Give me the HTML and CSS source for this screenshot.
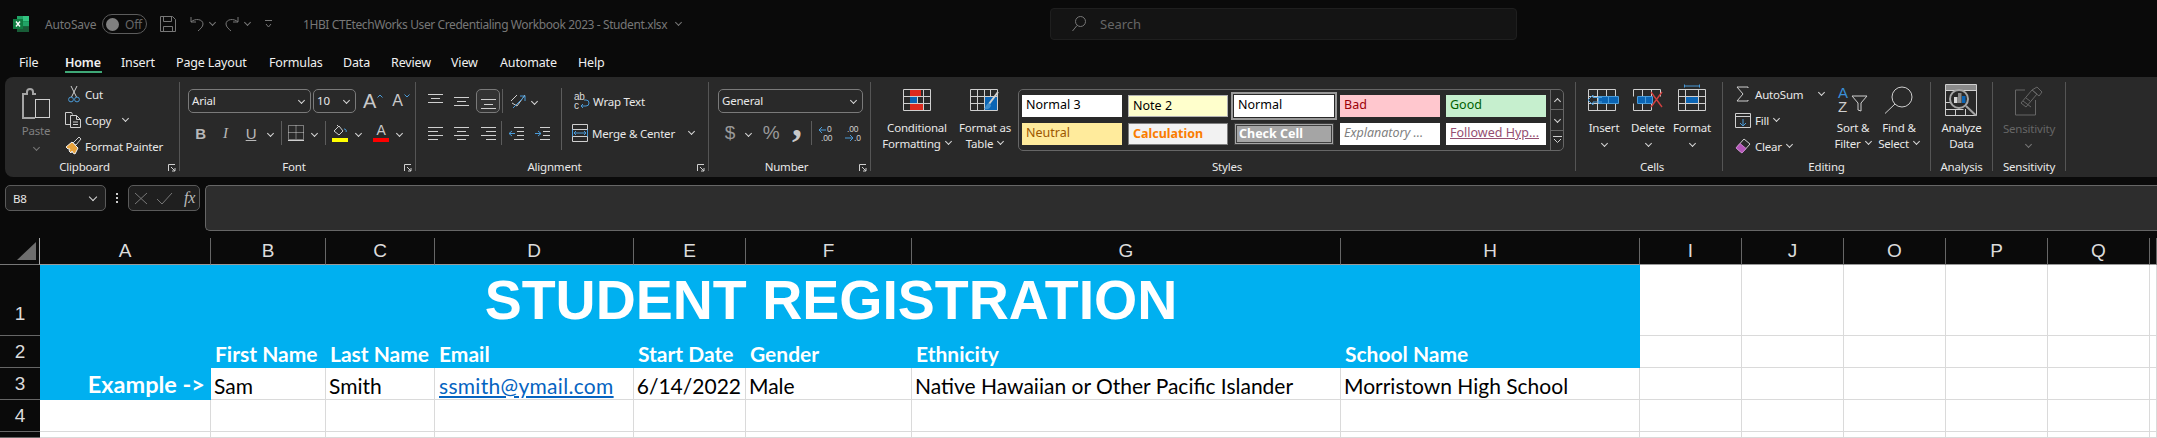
FILE: index.html
```html
<!DOCTYPE html>
<html lang="en">

<head>
  <title>1HBI CTEtechWorks User Credentialing Workbook 2023 - Student.xlsx</title>
  <meta charset="utf-8">
  <link rel="stylesheet" href="styles.css">
</head>

<body>
  <!-- title bar -->
  <header class="titlebar">
    <div class="tb-left">
      <svg class="logo" width="16" height="16">
        <rect x="4" y="0" width="12" height="5.5" fill="#21a366" />
        <rect x="10" y="0" width="6" height="5.5" fill="#33c481" />
        <rect x="4" y="5.5" width="12" height="5" fill="#107c41" />
        <rect x="10" y="5.5" width="6" height="5" fill="#21a366" />
        <rect x="4" y="10.5" width="12" height="5.5" fill="#185c37" />
        <rect x="0" y="3" width="10" height="10" fill="#107c41" />
        <path d="M3 5.5l4 5M7 5.5l-4 5" stroke="#fff" stroke-width="1.4" />
      </svg>
      <span class="autosave">AutoSave</span>
      <span class="toggle"><i class="knob"></i>Off</span>
      <svg class="i dim save" width="16" height="16">
        <path d="M.5.5h12l3 3v12H.5zM3.5.5v5h8v-5M3.5 15.5v-5h9v5" />
      </svg>
      <svg class="i dim undo" width="14" height="16">
        <path d="M1 1v5h5M1 6c4-4 12-3 12 2 0 3-3 5-5 7" />
      </svg>
      <i class="chev dimchev chev-undo"></i>
      <svg class="i dim redo" width="14" height="16">
        <path d="M13 1v5H8M13 6C9 2 1 3 1 8c0 3 3 5 5 7" />
      </svg>
      <i class="chev dimchev chev-redo"></i>
      <svg class="i dim custom" width="8" height="8">
        <path d="M0 .5h7M1 4l2.5 3L6 4" />
      </svg>
      <span class="doc">1HBI CTEtechWorks User Credentialing Workbook 2023 - Student.xlsx</span>
      <i class="chev dimchev chev-doc"></i>
    </div>
    <div class="search">
      <svg class="i dim" width="14" height="16">
        <circle cx="8.5" cy="5.5" r="5" />
        <path d="M5 9.5L.5 15" />
      </svg>
      <span>Search</span>
    </div>
  </header>

  <!-- tabs -->
  <nav class="tabs">
    <a>File</a>
    <a class="active">Home</a>
    <a>Insert</a>
    <a>Page Layout</a>
    <a>Formulas</a>
    <a>Data</a>
    <a>Review</a>
    <a>View</a>
    <a>Automate</a>
    <a>Help</a>
  </nav>

  <!-- ribbon -->
  <section class="ribbon">

    <div class="grp g-clip">
      <div class="grp-body">
        <div class="big paste">
          <svg class="i" width="28" height="32">
            <path class="thick" d="M14 6h-3V4a3 3 0 0 0-6 0v2H1v24h12" transform="translate(0 1)" />
            <rect x="13.5" y="12.5" width="14" height="18" />
          </svg>
          <span class="muted">Paste</span>
          <i class="chev dimchev"></i>
        </div>
        <div class="stack">
          <div class="line">
            <span class="slot">
              <svg class="i cut-ic" width="12" height="18">
                <path d="M3 1l5.5 11M9 1L3.5 12" />
                <circle class="blue" cx="3" cy="14.5" r="2.4" />
                <circle class="blue" cx="9" cy="14.5" r="2.4" />
              </svg>
            </span>
            Cut
          </div>
          <div class="line">
            <span class="slot">
              <svg class="i" width="16" height="16">
                <path d="M5 12.5H.5V.5h6l1 2" />
                <path d="M5.5 3.5h6l4 4v8h-10zM11.5 3.5v4h4M8 10h5M8 12.5h5" />
              </svg>
            </span>
            Copy<i class="chev chev-copy"></i>
          </div>
          <div class="line">
            <span class="slot">
              <svg class="i" width="17" height="20">
                <path class="orange" d="M1 11l6-5 6 6-3 6-2-1-1-2-1 2-2-2 1-2-2 0z" />
                <path d="M8 7l6-6 2 2-5 6z" />
              </svg>
            </span>
            Format Painter
          </div>
        </div>
      </div>
      <div class="grp-label has-launcher">Clipboard</div>
      <svg class="i launcher" width="8" height="8"><path d="M.5 7V.5H7M3 3l4 4M7 4v3H4" /></svg>
    </div>

    <div class="grp g-font">
      <div class="rows">
        <div class="row">
          <div class="sel font-name">Arial<i class="chev"></i></div>
          <div class="sel font-size">10<i class="chev"></i></div>
          <span class="grow">A</span>
          <svg class="i caret" width="6" height="4"><path class="sky" d="M.5 3.5L3 1l2.5 2.5" /></svg>
          <span class="shrink">A</span>
          <svg class="i caret" width="6" height="4"><path class="sky" d="M.5.5L3 3l2.5-2.5" /></svg>
        </div>
        <div class="row">
          <span class="b w25"><b>B</b></span>
          <span class="b w25"><em>I</em></span>
          <span class="b w26"><u>U</u></span>
          <span class="b w12"><i class="chev"></i></span>
          <span class="vsep ml5"></span>
          <svg class="i ml6" width="16" height="16">
            <path class="dots" d="M.5.5h15v14H.5zM8 .5v14M.5 7.5h15" />
            <path d="M0 15.5h16" />
          </svg>
          <span class="b w12 ml4"><i class="chev"></i></span>
          <span class="vsep ml5"></span>
          <span class="swatch ml6">
            <svg class="i" width="16" height="13"><path d="M2 7l5-5 4 5-4 4zM5 1l2 2" /><path class="sky" d="M12 5a2 2 0 0 1 2 3" /></svg>
            <i class="bar yellow"></i>
          </span>
          <span class="b w20"><i class="chev"></i></span>
          <span class="swatch ml5">
            <span class="swatch-a">A</span>
            <i class="bar red"></i>
          </span>
          <span class="b w20"><i class="chev"></i></span>
        </div>
      </div>
      <div class="grp-label has-launcher">Font</div>
      <svg class="i launcher" width="8" height="8"><path d="M.5 7V.5H7M3 3l4 4M7 4v3H4" /></svg>
    </div>

    <div class="grp g-align">
      <div class="split">
        <div class="rows al-left">
          <div class="row">
            <span class="b w26 ml6"><svg class="i" width="15" height="24"><path d="M0 5.5h15M3 9.5h9M0 13.5h15" /></svg></span>
            <span class="b w26"><svg class="i" width="15" height="24"><path d="M0 8.5h15M3 12.5h9M0 16.5h15" /></svg></span>
            <span class="b w24 selected ml2"><svg class="i" width="15" height="24"><path d="M0 10.5h15M3 15.5h9M0 19.5h15" /></svg></span>
            <span class="vsep ml2"></span>
            <svg class="i ml7" width="17" height="17"><path d="M1 8l6-6M2 10l5 3 8-11" /><path class="sky" d="M3 15L15 3M10 3h5v5" /></svg>
            <span class="b w14"><i class="chev"></i></span>
          </div>
          <div class="row">
            <span class="b w26 ml6"><svg class="i" width="15" height="24"><path d="M0 6.5h15M0 10.5h10M0 14.5h15M0 18.5h10" /></svg></span>
            <span class="b w26"><svg class="i" width="15" height="24"><path d="M0 6.5h15M3 10.5h9M0 14.5h15M3 18.5h9" /></svg></span>
            <span class="b w26 ml1"><svg class="i" width="15" height="24"><path d="M0 6.5h15M5 10.5h10M0 14.5h15M5 18.5h10" /></svg></span>
            <span class="vsep"></span>
            <span class="b w26 ml1"><svg class="i" width="15" height="24"><path d="M5 6.5h10M8 10.5h7M8 14.5h7M5 18.5h10" /><path class="sky" d="M0 12.5h6M3 10l-3 2.5L3 15" /></svg></span>
            <span class="b w26"><svg class="i" width="15" height="24"><path d="M5 6.5h10M8 10.5h7M8 14.5h7M5 18.5h10" /><path class="sky" d="M0 12.5h6M3 10l3 2.5L3 15" /></svg></span>
          </div>
        </div>
        <span class="vsep tall"></span>
        <div class="rows al-right">
          <div class="row">
            <svg class="i wrap-ic" width="16" height="20">
              <text x="0" y="9" class="svgtxt">ab</text>
              <text x="0" y="18" class="svgtxt">c</text>
              <path class="sky" d="M7 15h5a3 3 0 0 0 0-6h-2M9 13l-2 2 2 2" />
            </svg>
            <span class="ml3">Wrap Text</span>
          </div>
          <div class="row">
            <svg class="i merge-ic" width="16" height="20">
              <path d="M.5 1.5h15v17H.5zM.5 6.5h15M.5 13.5h15" />
              <path class="sky" d="M2 10h12M4 8l-2 2 2 2M12 8l2 2-2 2M.5 6.5v7M15.5 6.5v7" />
            </svg>
            <span class="ml4">Merge &amp; Center</span>
            <i class="chev chev-merge"></i>
          </div>
        </div>
      </div>
      <div class="grp-label has-launcher">Alignment</div>
      <svg class="i launcher" width="8" height="8"><path d="M.5 7V.5H7M3 3l4 4M7 4v3H4" /></svg>
    </div>

    <div class="grp g-num">
      <div class="rows">
        <div class="row">
          <div class="sel num-fmt">General<i class="chev"></i></div>
        </div>
        <div class="row">
          <span class="b w24 bigsym">$</span>
          <span class="b w12"><i class="chev"></i></span>
          <span class="b w34 bigsym">%</span>
          <span class="b w18 comma">,</span>
          <span class="vsep ml5"></span>
          <span class="b w28">
            <svg class="i" width="17" height="17">
              <text x="9" y="7" class="svgnum">0</text>
              <text x="3" y="16" class="svgnum">.00</text>
              <path class="sky" d="M1 5h7M4 2L1 5l3 3" />
            </svg>
          </span>
          <span class="b w24">
            <svg class="i" width="17" height="17">
              <text x="3" y="7" class="svgnum">.00</text>
              <text x="10" y="16" class="svgnum">.0</text>
              <path class="sky" d="M1 13h8M6 10l3 3-3 3" />
            </svg>
          </span>
        </div>
      </div>
      <div class="grp-label has-launcher">Number</div>
      <svg class="i launcher" width="8" height="8"><path d="M.5 7V.5H7M3 3l4 4M7 4v3H4" /></svg>
    </div>

    <div class="grp g-styles">
      <div class="grp-body">
        <div class="big w76">
          <svg class="i" width="28" height="22">
            <path d="M.5.5h27v21H.5zM7.5.5v21M14.5.5v21M20.5.5v21M.5 7.5h27M.5 14.5h27" />
            <rect class="red-f" x="7" y="1" width="11" height="6" />
            <rect class="blue-f" x="7" y="8" width="7" height="6" />
            <rect class="red-f" x="7" y="15" width="13" height="6" />
          </svg>
          <span class="lbl">Conditional</span>
          <span class="lbl">Formatting<i class="chev ch-in"></i></span>
        </div>
        <div class="big w60">
          <svg class="i" width="30" height="22">
            <path d="M.5.5h27v21H.5zM7.5.5v21M14.5.5v21M20.5.5v21M.5 7.5h27M.5 14.5h27" />
            <rect class="blue-f" x="15" y="8" width="12" height="13" />
            <path class="brush" d="M28 3L19 15" />
            <path class="sky-f" d="M19 14c-3 1-3 4-5 6 4 1 7-1 7-4z" />
          </svg>
          <span class="lbl">Format as</span>
          <span class="lbl">Table<i class="chev ch-in"></i></span>
        </div>
        <div class="gallery">
          <div class="gal-grid">
            <span class="st">Normal 3</span>
            <span class="st note">Note 2</span>
            <span class="st picked">Normal</span>
            <span class="st bad">Bad</span>
            <span class="st good">Good</span>
            <span class="st neutral">Neutral</span>
            <span class="st calc">Calculation</span>
            <span class="st check">Check Cell</span>
            <span class="st expl">Explanatory ...</span>
            <span class="st followed">Followed Hyp...</span>
          </div>
          <div class="gal-scroll">
            <span><i class="chev up"></i></span>
            <span><i class="chev"></i></span>
            <span><svg class="i" width="9" height="8"><path d="M0 .5h9M1 3l3.500 3.500L8 3" /></svg></span>
          </div>
        </div>
      </div>
      <div class="grp-label">Styles</div>
    </div>

    <div class="grp g-cells">
      <div class="grp-body">
        <div class="big w44">
          <svg class="i" width="32" height="22">
            <path d="M.5.5h27v21H.5zM9.5.5v21M18.5.5v21M.5 7.5h27M.5 14.5h27" />
            <rect class="blue-f" x="10" y="8" width="20" height="6" />
            <path class="sky" d="M30.500 7.500h-20v7h20zM20.500 7.500v7" />
            <path class="sky" d="M14 8.500H5V6L0 11l5 5v-3h9" />
          </svg>
          <span class="lbl">Insert</span>
          <span class="lbl"><i class="chev"></i></span>
        </div>
        <div class="big w44">
          <svg class="i" width="30" height="22">
            <path d="M.5.5h27v7M.5.5v7M.5 14.500v7h18M9.500 0v7M18.500 0v7M9.500 15v6M18.500 15v6" />
            <rect class="blue-f" x="5" y="8" width="14" height="6" />
            <path class="sky" d="M4.500 7.500h15v7h-15zM12.500 7.500v7" />
            <path class="xred" d="M18 3l11 15M29 3L18 18" />
          </svg>
          <span class="lbl">Delete</span>
          <span class="lbl"><i class="chev"></i></span>
        </div>
        <div class="big w44">
          <svg class="i top5" width="28" height="27">
            <path class="sky" d="M6.500.5v3M21.500.5v3M6.500 2h15" />
            <path d="M.5 5.500h27v21H.5zM7.500 5.500v21M20.500 5.500v21M.5 12.500h27M.5 19.500h27" />
            <rect class="blue-f" x="8" y="13" width="12" height="6" />
          </svg>
          <span class="lbl">Format</span>
          <span class="lbl"><i class="chev"></i></span>
        </div>
      </div>
      <div class="grp-label">Cells</div>
    </div>

    <div class="grp g-edit">
      <div class="grp-body">
        <div class="stack edit-col">
          <div class="line">
            <span class="slot16">
              <svg class="i" width="14" height="16"><path d="M12 2V1H1l6 7-6 7h11v-1" /></svg>
            </span>
            AutoSum<i class="chev chev-sum"></i>
          </div>
          <div class="line">
            <span class="slot16">
              <svg class="i" width="16" height="15"><path d="M.5.5h15v14H.5zM.5 3.500h15" /><path class="sky" d="M8 6v7M5 10l3 3 3-3" /></svg>
            </span>
            Fill<i class="chev ch-in"></i>
          </div>
          <div class="line">
            <span class="slot16">
              <svg class="i" width="16" height="16"><path d="M1 10l8-9 6 5-8 9z" /><path class="purple-f" d="M1 10l4-4.500 6 5L7 15z" /></svg>
            </span>
            Clear<i class="chev ch-in"></i>
          </div>
        </div>
        <div class="big w46">
          <svg class="i tall-ic" width="30" height="28">
            <text x="0" y="12" class="svgaz blue-t">A</text>
            <text x="0" y="26" class="svgaz">Z</text>
            <path d="M14 10h15l-6 7v8l-3-1v-7z" />
          </svg>
          <span class="lbl">Sort &amp;</span>
          <span class="lbl">Filter<i class="chev ch-in"></i></span>
        </div>
        <div class="big w46">
          <svg class="i tall-ic" width="30" height="28">
            <circle cx="18" cy="11" r="10" />
            <path d="M11 18L1 27.500" />
          </svg>
          <span class="lbl">Find &amp;</span>
          <span class="lbl">Select<i class="chev ch-in"></i></span>
        </div>
      </div>
      <div class="grp-label">Editing</div>
    </div>

    <div class="grp g-ana">
      <div class="grp-body center">
        <div class="big">
          <svg class="i ana-ic" width="32" height="32">
            <path d="M.5.5h31v31H.5zM.5 6.500h31M.5 18.500h5M.5 25.500h18M10.500 25v6M20.500 25v6" />
            <rect x="1" y="1" width="30" height="5" class="gray-f" />
            <circle cx="14" cy="15" r="9" class="thick" />
            <rect x="9" y="13" width="3.500" height="6" class="light-f" />
            <rect x="13" y="9" width="3.500" height="10" class="gray-f" />
            <rect x="17" y="12" width="3.500" height="7" class="blue-f" />
            <path d="M21 22l10 9.500" class="thick" />
          </svg>
          <span class="lbl">Analyze</span>
          <span class="lbl">Data</span>
        </div>
      </div>
      <div class="grp-label">Analysis</div>
    </div>

    <div class="grp g-sens">
      <div class="grp-body center">
        <div class="big">
          <svg class="i off tall-ic" width="28" height="29">
            <path d="M10 4H.5v25h20V14" />
            <path d="M6 17L17 4l5 4L11 21z" />
            <path d="M8 15l8 6M11 12l4 3" />
            <path d="M17 4l5-3 5 5-3 4z" />
          </svg>
          <span class="lbl off-t">Sensitivity</span>
          <span class="lbl"><i class="chev dimchev"></i></span>
        </div>
      </div>
      <div class="grp-label">Sensitivity</div>
    </div>
  </section>

  <!-- name box and formula bar -->
  <div class="fbar">
    <div class="namebox">B8<i class="chev nb"></i></div>
    <div class="fdots"><i></i><i></i><i></i></div>
    <div class="fxbox">
      <svg class="i dim" width="14" height="13"><path d="M1 1l12 11M13 1L1 12" /></svg>
      <svg class="i dim" width="17" height="13"><path d="M1 7l5 5L16 1" /></svg>
      <span class="fx">fx</span>
    </div>
    <div class="finput"></div>
  </div>

  <!-- sheet -->
  <main class="sheet">
    <div class="corner"><svg width="19" height="18"><path d="M19 0v18H0z" fill="#6e6e6e" /></svg></div>
    <div class="ch">A</div><div class="ch">B</div><div class="ch">C</div><div class="ch">D</div><div class="ch">E</div><div class="ch">F</div><div class="ch">G</div><div class="ch">H</div><div class="ch">I</div><div class="ch">J</div><div class="ch">O</div><div class="ch">P</div><div class="ch">Q</div><div class="ch"></div>

    <div class="rh first">1</div>
    <div class="blue-cell title">STUDENT REGISTRATION</div>
    <div class="c"></div><div class="c"></div><div class="c"></div><div class="c"></div><div class="c"></div><div class="c"></div>

    <div class="rh">2</div>
    <div class="blue-cell"></div>
    <div class="blue-cell hd">First Name</div>
    <div class="blue-cell hd">Last Name</div>
    <div class="blue-cell hd">Email</div>
    <div class="blue-cell hd">Start Date</div>
    <div class="blue-cell hd">Gender</div>
    <div class="blue-cell hd">Ethnicity</div>
    <div class="blue-cell hd">School Name</div>
    <div class="c"></div><div class="c"></div><div class="c"></div><div class="c"></div><div class="c"></div><div class="c"></div>

    <div class="rh">3</div>
    <div class="blue-cell example">Example -&gt;</div>
    <div class="c txt">Sam</div>
    <div class="c txt">Smith</div>
    <div class="c txt link">ssmith@ymail.com</div>
    <div class="c txt num">6/14/2022</div>
    <div class="c txt">Male</div>
    <div class="c txt">Native Hawaiian or Other Pacific Islander</div>
    <div class="c txt">Morristown High School</div>
    <div class="c"></div><div class="c"></div><div class="c"></div><div class="c"></div><div class="c"></div><div class="c"></div>

    <div class="rh">4</div>
    <div class="c"></div><div class="c"></div><div class="c"></div><div class="c"></div><div class="c"></div><div class="c"></div><div class="c"></div><div class="c"></div><div class="c"></div><div class="c"></div><div class="c"></div><div class="c"></div><div class="c"></div><div class="c"></div>

    <div class="rh"></div>
    <div class="c"></div><div class="c"></div><div class="c"></div><div class="c"></div><div class="c"></div><div class="c"></div><div class="c"></div><div class="c"></div><div class="c"></div><div class="c"></div><div class="c"></div><div class="c"></div><div class="c"></div><div class="c"></div>
  </main>
</body>

</html>
```
FILE: styles.css
```css
* {
  box-sizing: border-box;
}

html,
body {
  margin: 0;
  height: 438px;
  overflow: hidden;
}

body {
  width: 2157px;
  background-color: #0a0a0a;
  color: #e8e8e8;
  font-family: "Noto Sans", sans-serif;
  font-size: 11.5px;
  letter-spacing: -.2px;
}

/* shared icon strokes */
svg {
  display: block;
  flex: none;
  overflow: visible;
}

.i {
  fill: none;
  stroke: #cfcfcf;
  stroke-width: 1;
}

.i.dim {
  stroke: #777;
}

.i.off {
  stroke: #666;
}

.i .blue,
.i .sky {
  stroke: #4a9bd8;
}

.i .thick {
  stroke-width: 2;
  stroke: #a5a5a5;
}

.i .orange {
  fill: #e8a33d;
  stroke: #f0f0f0;
}

.i .dots {
  stroke-dasharray: 1 1;
}

.i .brush {
  stroke-width: 2;
}

.i .xred {
  stroke: #d04040;
  stroke-width: 1.4;
}

.red-f {
  fill: #dc2a1e;
  stroke: none;
}

.blue-f {
  fill: #0a64b4;
  stroke: none;
}

.sky-f {
  fill: #3f8fce;
  stroke: none;
}

.gray-f {
  fill: #8a8a8a;
  stroke: none;
}

.light-f {
  fill: #d8d8d8;
  stroke: none;
}

.purple-f {
  fill: #b455b8;
  stroke: #c77fcc;
}

.svgtxt {
  font-family: "Liberation Sans", sans-serif;
  font-size: 10px;
  fill: #dcdcdc;
  stroke: none;
}

.svgnum {
  font-size: 8.5px;
  fill: #cfcfcf;
  stroke: none;
}

.svgaz {
  font-family: "Liberation Sans", sans-serif;
  font-size: 15px;
  fill: #cfcfcf;
  stroke: none;
}

.blue-t {
  fill: #3a8fd8;
}

.chev {
  display: inline-block;
  flex: none;
  width: 5px;
  height: 5px;
  border: solid #d8d8d8;
  border-width: 0 1.3px 1.3px 0;
  transform: rotate(45deg);
}

.chev.dimchev {
  border-color: #777;
}

.chev.up {
  transform: rotate(225deg);
  margin-top: 3px;
}

.ch-in {
  margin: 0 1px 3px 5px;
}

/* title bar */
.titlebar {
  display: flex;
  align-items: center;
  height: 48px;
}

.tb-left {
  display: flex;
  align-items: center;
  width: 1050px;
  padding-left: 13px;
  color: #777;
  font-size: 12px;
}

.autosave {
  margin-left: 16px;
  width: 57px;
}

.toggle {
  display: flex;
  align-items: center;
  width: 45px;
  height: 20px;
  padding-left: 3px;
  border: 1px solid #5c5c5c;
  border-radius: 10px;
  color: #666;
}

.knob {
  width: 13px;
  height: 13px;
  margin-right: 6px;
  border-radius: 50%;
  background-color: #808080;
}

.save {
  margin-left: 13px;
}

.undo {
  margin-left: 14px;
}

.chev-undo {
  margin: -4px 0 0 6px;
}

.redo {
  margin-left: 10px;
}

.chev-redo {
  margin: -4px 0 0 6px;
}

.custom {
  margin-left: 15px;
}

.doc {
  margin-left: 30px;
  width: 366px;
  white-space: nowrap;
  letter-spacing: -.4px;
}

.chev-doc {
  margin: -4px 0 0 7px;
}

.search {
  display: flex;
  align-items: center;
  gap: 14px;
  width: 467px;
  height: 32px;
  padding-left: 21px;
  background-color: #141414;
  border: 1px solid #1f1f1f;
  border-radius: 4px;
  color: #666;
  font-size: 13px;
  letter-spacing: 0;
}

/* tabs */
.tabs {
  display: grid;
  grid-template-columns: 46px 56px 55px 93px 74px 48px 60px 49px 78px 40px;
  height: 29px;
  padding-left: 19px;
}

.tabs a {
  height: 25px;
  line-height: 30px;
  font-size: 12.5px;
  letter-spacing: -.15px;
  white-space: nowrap;
  color: #f0f0f0;
}

.tabs a.active {
  width: 37px;
  font-weight: 600;
  border-bottom: 2px solid #3fa877;
}

/* ribbon */
.ribbon {
  display: flex;
  height: 100px;
  margin-left: 5px;
  padding: 5px 0 6px;
  background-color: #292929;
  border-radius: 8px 0 0 8px;
}

.grp {
  position: relative;
  display: flex;
  flex-direction: column;
  flex: none;
  height: 89px;
  border-right: 1px solid #555;
}

.grp-body,
.split {
  display: flex;
  flex: 1;
}

.grp-body.center {
  justify-content: center;
}

.grp-label {
  height: 14px;
  margin-bottom: -3px;
  line-height: 14px;
  text-align: center;
}

.has-launcher {
  padding-right: 15px;
}

.launcher {
  position: absolute;
  right: 3px;
  bottom: -1px;
}

.g-clip { width: 175px; }
.g-font { width: 236px; padding-left: 8px; }
.g-align { width: 293px; }
.g-num { width: 162px; padding-left: 9px; }
.g-styles { width: 705px; padding-left: 8px; }
.g-cells { width: 147px; padding-left: 6px; }
.g-edit { width: 208px; }
.g-ana { width: 62px; }
.g-sens { width: 73px; }

.big {
  display: flex;
  flex-direction: column;
  align-items: center;
  flex: none;
  padding-top: 7px;
}

.big .lbl {
  display: flex;
  align-items: center;
  justify-content: center;
  height: 16px;
  white-space: nowrap;
}

.big svg + .lbl {
  margin-top: 8px;
}

.w76 { width: 76px; }
.w60 { width: 60px; }
.w44 { width: 44px; }
.w46 { width: 46px; }

.top5 {
  margin-top: -5px;
}

.tall-ic {
  margin: -3px 0 -3px;
}

.ana-ic {
  margin: -5px 0 -5px;
}

.off-t {
  color: #666;
}

.stack {
  display: flex;
  flex-direction: column;
  gap: 2px;
}

.line {
  display: flex;
  align-items: center;
  height: 24px;
  white-space: nowrap;
}

.paste {
  width: 60px;
  padding: 5px 0 0 2px;
}

.paste span {
  margin-top: 4px;
}

.paste .chev {
  margin-top: 7px;
}

.muted {
  color: #808080;
}

.slot {
  display: flex;
  width: 20px;
}

.cut-ic {
  margin-left: 3px;
}

.chev-copy {
  margin: -3px 0 0 12px;
}

.slot16 {
  display: flex;
  justify-content: center;
  width: 16px;
  margin-right: 4px;
}

.edit-col {
  width: 107px;
  padding-left: 12px;
}

.chev-sum {
  margin: -3px 0 0 16px;
}

.rows {
  display: flex;
  flex: 1;
  flex-direction: column;
  gap: 8px;
  padding-top: 7px;
}

.row {
  display: flex;
  align-items: center;
  height: 24px;
  white-space: nowrap;
}

.sel {
  display: flex;
  align-items: center;
  justify-content: space-between;
  height: 24px;
  padding: 0 6px 2px 3px;
  background-color: #292929;
  border: 1px solid #7a7a7a;
  border-radius: 5px;
}

.font-name { width: 123px; }
.font-size { width: 43px; margin-left: 2px; }
.num-fmt { width: 145px; }

.grow,
.shrink {
  font-family: "Liberation Sans", sans-serif;
  color: #c8c8c8;
}

.grow {
  margin-left: 7px;
  font-size: 20px;
}

.shrink {
  margin-left: 9px;
  font-size: 16px;
}

.caret {
  margin: -10px 0 0 1px;
}

.b {
  display: flex;
  align-items: center;
  justify-content: center;
  flex: none;
  height: 24px;
  font-family: "Liberation Sans", sans-serif;
  font-size: 15px;
  color: #b8b8b8;
}

.b em {
  font-family: "Liberation Serif", serif;
}

.w12 { width: 12px; }
.w14 { width: 14px; }
.w18 { width: 18px; }
.w20 { width: 20px; }
.w24 { width: 24px; }
.w25 { width: 25px; }
.w26 { width: 26px; }
.w28 { width: 28px; }
.w34 { width: 34px; }

.ml1 { margin-left: 1px; }
.ml2 { margin-left: 2px; }
.ml3 { margin-left: 3px; }
.ml4 { margin-left: 4px; }
.ml5 { margin-left: 5px; }
.ml6 { margin-left: 6px; }
.ml7 { margin-left: 7px; }

.vsep {
  flex: none;
  width: 1px;
  height: 24px;
  background-color: #5c5c5c;
}

.vsep.tall {
  height: 62px;
  margin-top: 6px;
}

.selected {
  background-color: #333;
  border: 1px solid #7a7a7a;
  border-radius: 5px;
}

.swatch {
  display: flex;
  flex-direction: column;
  align-items: center;
  width: 16px;
}

.swatch-a {
  height: 13px;
  line-height: 13px;
  font-family: "Liberation Sans", sans-serif;
  font-size: 14px;
  color: #c8c8c8;
}

.bar {
  width: 16px;
  height: 4px;
  margin-top: 1px;
}

.yellow { background-color: #ffff00; }
.red { background-color: #ff0000; }

.al-left {
  flex: none;
  width: 145px;
}

.wrap-ic {
  margin-left: 12px;
}

.merge-ic {
  margin-left: 10px;
}

.chev-merge {
  margin: -3px 0 0 14px;
}

.bigsym {
  font-size: 19px;
  color: #9a9a9a;
}

.comma {
  font-family: "Liberation Serif", serif;
  font-size: 40px;
  font-weight: bold;
  padding-bottom: 22px;
  color: #c8c8c8;
}

/* style gallery */
.gallery {
  display: flex;
  width: 546px;
  height: 62px;
  margin: 7px 0 0 3px;
  border: 1px solid #666;
  border-radius: 5px;
}

.gal-grid {
  display: grid;
  grid-template-columns: repeat(5, 100px);
  grid-auto-rows: 22px;
  gap: 6px;
  width: 532px;
  padding: 5px 0 0 3px;
  border-right: 1px solid #666;
}

.gal-scroll {
  display: flex;
  flex-direction: column;
  flex: 1;
}

.gal-scroll span {
  display: flex;
  align-items: center;
  justify-content: center;
  flex: 1;
  border-bottom: 1px solid #666;
}

.gal-scroll span:last-child {
  border-bottom: none;
}

.st {
  height: 22px;
  padding-left: 4px;
  line-height: 20px;
  font-size: 12.5px;
  letter-spacing: 0;
  white-space: nowrap;
  overflow: hidden;
  background-color: #fff;
  color: #000;
}

.note { background-color: #ffffcc; border: 1px solid #b2b2b2; }
.picked { outline: 2px solid #9a9a9a; outline-offset: 1px; }
.bad { background-color: #ffc7ce; color: #9c0006; }
.good { background-color: #c6efce; color: #006100; }
.neutral { background-color: #ffeb9c; color: #9c5700; }
.calc { background-color: #f2f2f2; color: #fa7d00; font-weight: bold; border: 1px solid #7f7f7f; }
.check { background-color: #a5a5a5; color: #fff; font-weight: bold; border: 3px double #3f3f3f; line-height: 16px; padding-left: 2px; }
.expl { color: #7f7f7f; font-style: italic; }
.followed { color: #954f72; text-decoration: underline; }

/* formula bar */
.fbar {
  display: flex;
  align-items: flex-start;
  height: 46px;
  margin-top: 8px;
  padding-left: 5px;
}

.namebox {
  display: flex;
  align-items: center;
  justify-content: space-between;
  width: 101px;
  height: 26px;
  padding: 0 9px 0 7px;
  background-color: #1f1f1f;
  border: 1px solid #5a5a5a;
  border-radius: 5px;
}

.chev.nb {
  width: 6px;
  height: 6px;
  margin-top: -3px;
}

.fdots {
  display: flex;
  flex-direction: column;
  gap: 2px;
  width: 22px;
  padding: 8px 0 0 10px;
}

.fdots i {
  width: 2px;
  height: 2px;
  background-color: #ccc;
}

.fxbox {
  display: flex;
  align-items: center;
  gap: 8px;
  width: 72px;
  height: 26px;
  padding-left: 5px;
  background-color: #1f1f1f;
  border: 1px solid #5a5a5a;
  border-radius: 5px;
}

.fx {
  margin-left: 3px;
  font-family: "Liberation Serif", serif;
  font-style: italic;
  font-size: 16px;
  color: #bbb;
}

.finput {
  flex: 1;
  height: 46px;
  margin-left: 5px;
  background-color: #2d2d2d;
  border: solid #666;
  border-width: 1px 0 1px 1px;
  border-radius: 5px 0 0 5px;
}

/* sheet */
.sheet {
  display: grid;
  grid-template-columns: 40px 171px 115px 109px 199px 112px 166px 429px 299px 102px 102px 102px 102px 102px 1fr;
  grid-template-rows: 27px 71px 32px 32px 32px 6px;
  margin-top: 7px;
  background-color: #fff;
  letter-spacing: 0;
}

.corner {
  display: flex;
  justify-content: flex-end;
  padding: 4px 3px 0 0;
  background-color: #0a0a0a;
  border-bottom: 1px solid #777;
  border-right: 1px solid #aaa;
}

.ch,
.rh {
  display: flex;
  align-items: center;
  justify-content: center;
  background-color: #0a0a0a;
  font-family: "Liberation Sans", sans-serif;
  font-size: 19px;
  color: #dcdcdc;
}

.ch {
  border-right: 1px solid #666;
  border-bottom: 1px solid #999;
}

.rh {
  border-bottom: 1px solid #666;
}

.rh.first {
  padding-top: 28px;
}

.blue-cell {
  background-color: #00b0f0;
  color: #fff;
  font-family: "Lato", sans-serif;
}

.title {
  grid-column: span 8;
  padding-right: 18px;
  text-align: center;
  line-height: 71px;
  font-family: "Liberation Sans", sans-serif;
  font-weight: bold;
  font-size: 55.5px;
}

.hd {
  padding: 3px 0 0 4px;
  line-height: 30px;
  font-weight: bold;
  font-size: 21px;
  white-space: nowrap;
}

.example {
  padding-right: 6px;
  text-align: right;
  line-height: 32px;
  font-weight: bold;
  font-size: 23.5px;
  white-space: nowrap;
}

.c {
  background-color: #fff;
  border-right: 1px solid #dadada;
  border-bottom: 1px solid #dadada;
}

.txt {
  padding-left: 3px;
  line-height: 36px;
  font-family: "Lato", sans-serif;
  font-size: 21px;
  color: #000;
  white-space: nowrap;
}

.link {
  color: #0563c1;
  text-decoration: underline;
  padding-left: 4px;
  letter-spacing: .3px;
}

.num {
  padding: 0 4px 0 0;
  text-align: right;
}
```
